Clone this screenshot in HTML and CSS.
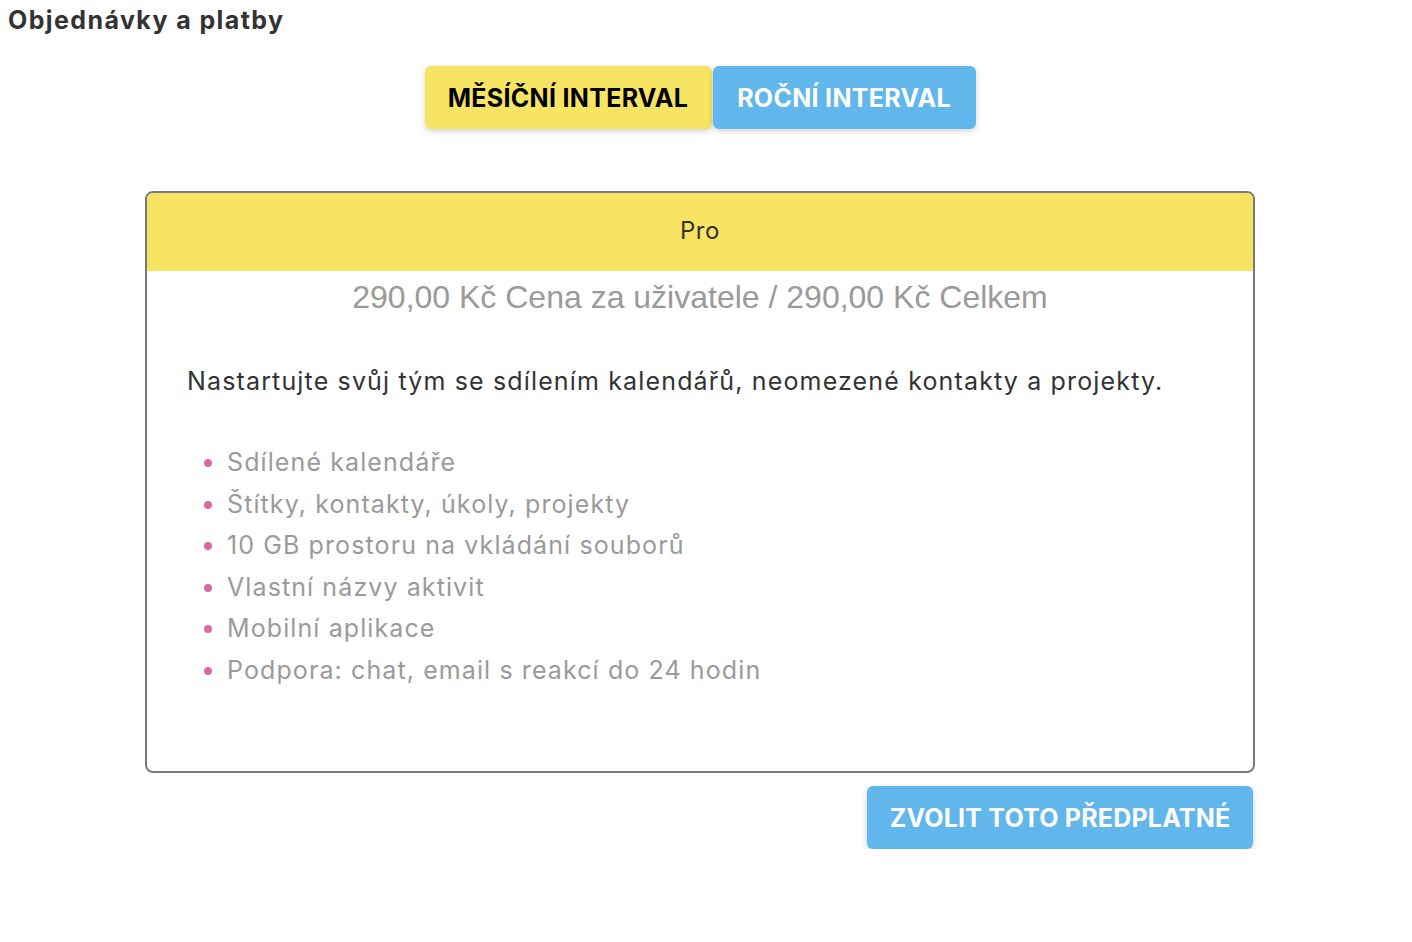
FILE: index.html
```html
<!DOCTYPE html>
<html lang="cs">
<head>
<meta charset="utf-8">
<title>Objednávky a platby</title>
<link rel="stylesheet" href="styles.css">
</head>
<body>
<div class="page">
  <h1 class="title">Objednávky a platby</h1>
  <div class="toggle">
    <button class="tbtn tbtn-yellow">MĚSÍČNÍ INTERVAL</button>
    <button class="tbtn tbtn-blue">ROČNÍ INTERVAL</button>
  </div>
  <div class="plan">
    <div class="card">
      <div class="card-head">Pro</div>
      <div class="price">290,00 Kč Cena za uživatele / 290,00 Kč Celkem</div>
      <p class="desc">Nastartujte svůj tým se sdílením kalendářů, neomezené kontakty a projekty.</p>
      <ul class="features">
        <li>Sdílené kalendáře</li>
        <li>Štítky, kontakty, úkoly, projekty</li>
        <li>10 GB prostoru na vkládání souborů</li>
        <li>Vlastní názvy aktivit</li>
        <li>Mobilní aplikace</li>
        <li>Podpora: chat, email s reakcí do 24 hodin</li>
      </ul>
    </div>
    <div class="actions">
      <button class="choose">ZVOLIT TOTO PŘEDPLATNÉ</button>
    </div>
  </div>
</div>
</body>
</html>
```
FILE: styles.css
```css
* { box-sizing: border-box; }
body {
  margin: 8px;
  background: #fff;
  font-family: Inter, "Open Sans", sans-serif;
  color: #333;
}
.page {
  width: 1384px;
}
.title {
  margin: 0;
  font-size: 25px;
  line-height: 24px;
  font-weight: 700;
  letter-spacing: 1.4px;
  color: #333;
}
.toggle {
  display: flex;
  justify-content: center;
  gap: 1px;
  margin-top: 34px;
}
.tbtn {
  border: none;
  border-radius: 6px;
  height: 63px;
  font-family: inherit;
  font-size: 25px;
  font-weight: 700;
  letter-spacing: 0.3px;
  box-shadow: 0 2px 6px rgba(0,0,0,0.18);
  cursor: pointer;
}
.tbtn-yellow { width: 287px; background: #f7e463; color: #000; }
.tbtn-blue { width: 263px; background: #61b6ec; color: #fff; }
.plan {
  width: 1110px;
  margin: 62px auto 0;
}
.card {
  border: 2px solid #7a7a7a;
  border-radius: 8px;
  overflow: hidden;
  height: 582px;
}
.card-head {
  background: #f7e463;
  height: 78px;
  display: flex;
  align-items: center;
  justify-content: center;
  padding-bottom: 4px;
  font-size: 24px;
  letter-spacing: 0.6px;
  color: #333;
}
.price {
  text-align: center;
  font-family: "Liberation Sans", Arial, sans-serif;
  font-size: 32px;
  line-height: 36px;
  margin-top: 8px;
  color: #9a9a9a;
}
.desc {
  margin: 51px 0 0 40px;
  font-size: 25px;
  line-height: 30px;
  letter-spacing: 1.15px;
  color: #333;
}
.features {
  margin: 46px 0 0 0;
  padding-left: 80px;
  font-size: 25px;
  line-height: 41.6px;
  letter-spacing: 1.1px;
  color: #9a9a9a;
}
.features li::marker { color: #d96aa5; }
.actions {
  display: flex;
  justify-content: flex-end;
  margin-top: 13px;
  padding-right: 2px;
}
.choose {
  border: none;
  border-radius: 6px;
  width: 386px;
  height: 63px;
  background: #61b6ec;
  color: #fff;
  font-family: inherit;
  font-size: 25px;
  font-weight: 700;
  letter-spacing: 0.2px;
  box-shadow: 0 2px 6px rgba(0,0,0,0.18);
}
```
